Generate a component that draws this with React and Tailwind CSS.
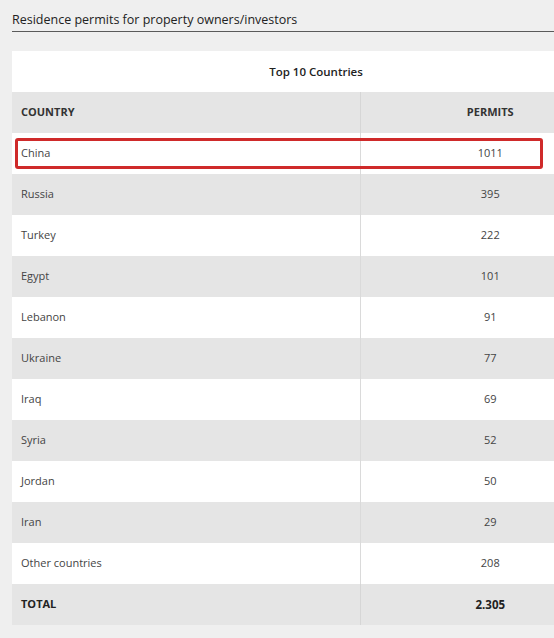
import React from "react";

const rows = [
  ["China", "1011"],
  ["Russia", "395"],
  ["Turkey", "222"],
  ["Egypt", "101"],
  ["Lebanon", "91"],
  ["Ukraine", "77"],
  ["Iraq", "69"],
  ["Syria", "52"],
  ["Jordan", "50"],
  ["Iran", "29"],
  ["Other countries", "208"],
];

const App = () => {
  return (
    <div
      className="relative w-[554px] h-[638px] overflow-hidden bg-[#efefef] text-[#333]"
      style={{ fontFamily: '"Open Sans", "DejaVu Sans", sans-serif' }}
    >
      {/* Title */}
      <div className="pl-3 pt-[12px]">
        <h2 className="text-[12.5px] leading-[16px] text-[#222] pb-[3px] border-b border-[#5a5a5a]">
          Residence permits for property owners/investors
        </h2>
      </div>

      {/* Table */}
      <div className="pl-3 pt-[19px]">
        <table className="w-[608px] border-collapse text-[11px]">
          <thead>
            <tr className="bg-white h-[41px]">
              <th colSpan={2} className="font-semibold text-[11.5px] text-[#222] text-center">
                Top 10 Countries
              </th>
            </tr>
            <tr className="bg-[#e5e5e5] h-[41px]">
              <th className="w-[348px] text-left pl-[9px] font-bold text-[11px] text-[#333] border-r border-[#d6d6d6]">
                COUNTRY
              </th>
              <th className="text-center font-bold text-[11px] text-[#333]">PERMITS</th>
            </tr>
          </thead>
          <tbody>
            {rows.map(([country, permits], i) => (
              <tr key={country} className={i % 2 === 0 ? "bg-white h-[41px]" : "bg-[#e5e5e5] h-[41px]"}>
                <td className="pl-[9px] text-[#444] border-r border-[#dadada]">{country}</td>
                <td className="text-center text-[#444]">{permits}</td>
              </tr>
            ))}
            <tr className="bg-[#e5e5e5] h-[41px]">
              <td className="pl-[9px] font-bold text-[#222] border-r border-[#d6d6d6]">TOTAL</td>
              <td className="text-center font-bold text-[#222] text-[11.5px]">2.305</td>
            </tr>
          </tbody>
        </table>
      </div>

      {/* Highlight annotation */}
      <div className="absolute left-[15px] top-[138px] w-[528px] h-[31px] border-[3px] border-[#cf2a2a] rounded-[3px] pointer-events-none" />
    </div>
  );
};

export default App;
